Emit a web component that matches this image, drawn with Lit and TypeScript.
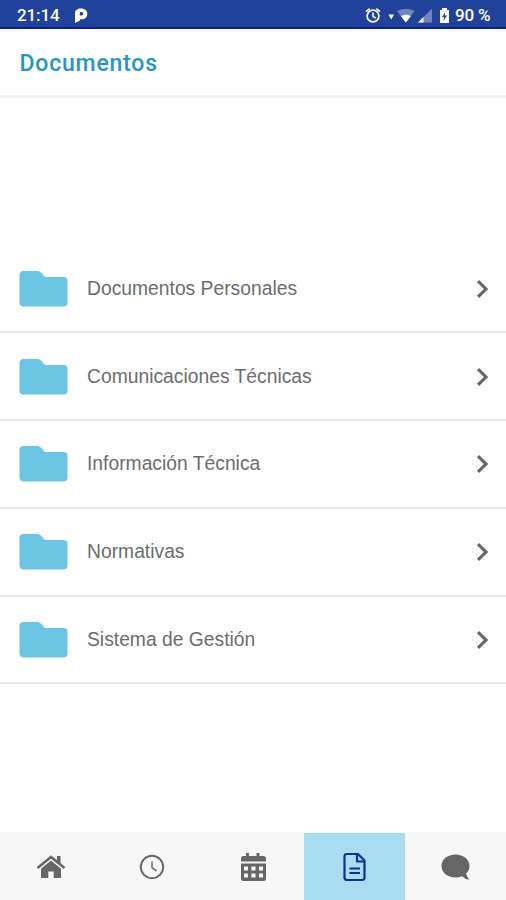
import { LitElement, html, css, svg } from "lit";
import { customElement, property } from "lit/decorators.js";
import { classMap } from "lit/directives/class-map.js";

const FOLDERS = [
  "Documentos Personales",
  "Comunicaciones Técnicas",
  "Información Técnica",
  "Normativas",
  "Sistema de Gestión",
];

@customElement("status-bar")
class StatusBar extends LitElement {
  static styles = css`
    :host {
      display: flex;
      align-items: center;
      height: 29px;
      box-sizing: border-box;
      padding: 4px 16px 0 17px;
      border-bottom: 2px solid #0c2086;
      background: #21429a;
      color: #fff;
      font: 500 17px/23px Roboto, sans-serif;
    }
    svg { display: block; flex: none; }
    .time { width: 43px; white-space: nowrap; letter-spacing: -0.100px; }
    .app { margin-left: 14px; }
    .right { display: flex; align-items: center; margin-left: auto; white-space: nowrap; }
    .level { width: 35px; margin-left: 5px; letter-spacing: -0.200px; }
  `;
  render() {
    return html`
      <span class="time">21:14</span>
      <svg class="app" width="14" height="16" viewBox="0 0 14 16">
        <path fill-rule="evenodd" fill="#fff" d="M1 15V5C1 2 3.500 .5 7 .5C11 .5 13.300 2.800 13.300 6S11 11.300 7.500 11.300H6V12.500ZM5.800 7.600H7.500A1.800 1.800 0 0 0 7.500 4H7Q5.800 4 5.800 5.200Z" />
      </svg>
      <div class="right">
        <svg width="74" height="18" viewBox="0 0 74 18">
          <g fill="none" stroke="#fff" stroke-width="1.700">
            <circle cx="8" cy="9" r="5.900" />
            <path d="M8 5.500V9.500L10.800 11M1 4.600L4.600 1.700M15 4.600L11.400 1.700" stroke-width="1.600" />
          </g>
          <path d="M23.500 7.500H29L26.200 12.500Z" fill="#fff" />
          <path d="M32 4.300C37 .8 44.500 .8 49.500 4.300L40.800 15.500Z" fill="#7085bd" />
          <path d="M36 9.200C39 7.200 43 7.200 45.800 9.200L40.800 15.500Z" fill="#fff" />
          <path d="M67 1.500V15.500H53Z" fill="#7085bd" />
          <path d="M58.500 10V15.500H53Z" fill="#fff" />
        </svg>
        <svg width="11" height="17" viewBox="0 0 11 17">
          <path d="M3 1H8V3H10V16H1V3H3Z" fill="#fff" />
          <path d="M6.200 5L3 10H5.200L4.500 14L8 8.500H5.800Z" fill="#21429a" />
        </svg>
        <span class="level">90 %</span>
      </div>
    `;
  }
}

@customElement("folder-row")
class FolderRow extends LitElement {
  @property() label = "";
  static styles = css`
    :host {
      display: flex;
      align-items: center;
      height: 87.750px;
      box-sizing: border-box;
      padding: 0.700px 16px 0 19px;
      border-bottom: 2px solid #e9e9e9;
      color: #6c6c6c;
      font: 19.300px/24px "Liberation Sans", Arial, sans-serif;
    }
    svg { display: block; flex: none; }
    .label { flex: 1; margin-left: 18px; white-space: nowrap; }
  `;
  render() {
    return html`
      <svg width="50" height="36" viewBox="0 0 50 36">
        <path d="M4.500 0H18.500Q20.500 0 22 1.500L26 6H44.500Q48.500 6 48.500 10V31.500Q48.500 35.500 44.500 35.500H4.500Q.5 35.500 .5 31.500V4Q.5 0 4.500 0Z" fill="#6bc5e3" />
      </svg>
      <span class="label">${this.label}</span>
      <svg width="14" height="20" viewBox="0 0 14 20">
        <path d="M2 2.200L10 10L2 17.800" fill="none" stroke="#666" stroke-width="3.100" />
      </svg>
    `;
  }
}

const TABS = [
  svg`<path d="M2.500 17L16 6L29.500 17" fill="none" stroke="#666" stroke-width="2.600"/>
    <path d="M22 5H25.500V13L22 10Z" fill="#666"/>
    <path d="M16 9.600L26 17.800V27H18.700V20.500H13.300V27H6V17.800Z" fill="#666"/>`,
  svg`<circle cx="16" cy="16" r="11.200" fill="none" stroke="#666" stroke-width="1.900"/>
    <path d="M16 10.500V16.500L20.500 20" fill="none" stroke="#777" stroke-width="1.600"/>`,
  svg`<path d="M4 10.500V7.500Q4 5 6.500 5H9V2H12V5H19.500V2H22.500V5H26Q29 5 29 7.500V10.500Z" fill="#666"/>
    <path fill-rule="evenodd" fill="#666" d="M4 12.500H29V27.500Q29 30 26.500 30H6.500Q4 30 4 27.500ZM7 15.500V19.500H11V15.500ZM14.300 15.500V19.500H18.500V15.500ZM22 15.500V19.500H26V15.500ZM7 22.500V26.500H11V22.500ZM14.300 22.500V26.500H18.500V22.500ZM22 22.500V26.500H26V22.500Z"/>`,
  svg`<g fill="none" stroke="#142f91" stroke-width="2.200" stroke-linejoin="round">
      <path d="M8 3H19L25.500 9.500V26.500Q25.500 29 23 29H8Q5.500 29 5.500 26.500V5.500Q5.500 3 8 3Z"/>
      <path d="M18 3V10.500H25.500M10.500 17.500H21M10.500 22H21"/></g>`,
  svg`<path d="M16.500 3.500C24.500 3.500 30.500 8.500 30.500 15Q30.500 19.500 27 22.500Q28 26 30.500 28.800Q26.500 28.500 23 25.200Q20 26.500 16.500 26.500C8.500 26.500 2.500 21.500 2.500 15S8.500 3.500 16.500 3.500Z" fill="#666"/>`,
];

@customElement("tab-bar")
class TabBar extends LitElement {
  static styles = css`
    :host {
      display: grid;
      grid-template-columns: repeat(5, 1fr);
      height: 68px;
      background: #f7f7f7;
    }
    .tab { display: flex; align-items: center; justify-content: center; padding-top: 2px; }
    .active { background: #a8dcee; margin-top: 1px; padding: 1px 0 0 1px; }
    svg { display: block; width: 32px; height: 32px; }
  `;
  render() {
    return TABS.map((icon, i) => html`
      <div class=${classMap({ tab: true, active: i === 3 })}>
        <svg viewBox="0 0 32 32">${icon}</svg>
      </div>`);
  }
}

@customElement("app-root")
class AppRoot extends LitElement {
  static styles = css`
    :host {
      display: flex;
      flex-direction: column;
      width: 100%;
      height: 100vh;
      overflow: hidden;
      background: #fff;
    }
    status-bar, tab-bar { flex: none; }
    .header {
      height: 69px;
      box-sizing: border-box;
      flex: none;
      display: flex;
      align-items: center;
      padding: 3px 19px 0 19.500px;
      border-bottom: 3px solid #f2f2f2;
      color: #2795c4;
      font: 500 23px/30px Roboto, sans-serif;
      letter-spacing: 0.800px;
    }
    .content {
      flex: 1;
      min-height: 0;
      display: flex;
      flex-direction: column;
      justify-content: center;
    }
  `;
  render() {
    return html`
      <status-bar></status-bar>
      <div class="header">Documentos</div>
      <div class="content">
        ${FOLDERS.map((name) => html`<folder-row .label=${name}></folder-row>`)}
      </div>
      <tab-bar></tab-bar>
    `;
  }
}
